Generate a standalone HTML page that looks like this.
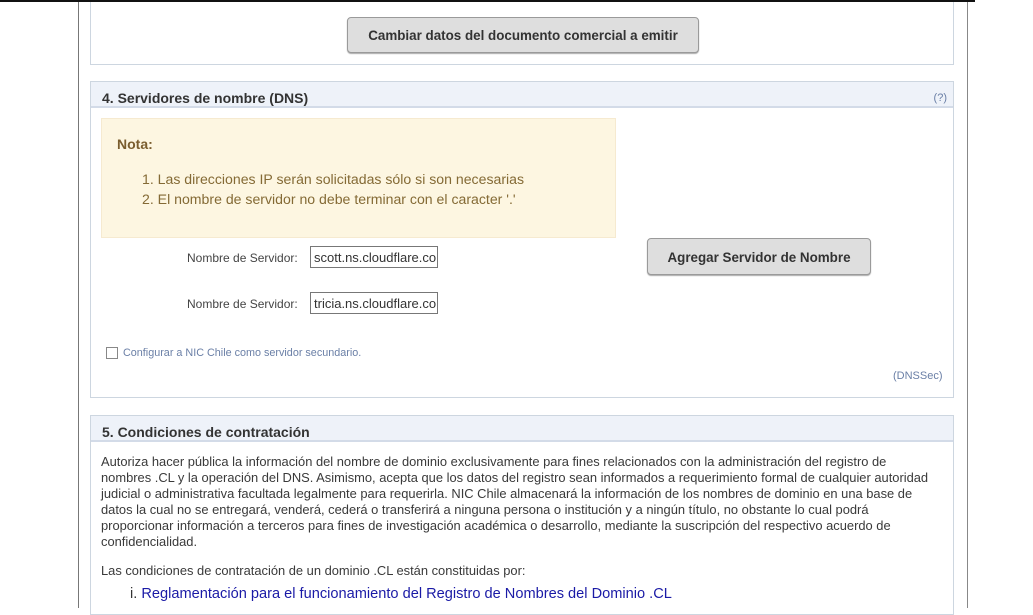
<!DOCTYPE html>
<html><head><meta charset="utf-8"><style>
*{margin:0;padding:0;box-sizing:border-box}
body{width:1033px;height:608px;overflow:hidden;background:#fff;font-family:"Liberation Sans",Arial,sans-serif;position:relative;color:#333}
.abs{position:absolute}
.vl{position:absolute;top:0;height:608px;width:1px;background:#777}
.panel{position:absolute;left:90px;width:864px;border:1px solid #cdd6e0;background:#fff}
.hdr{height:26px;background:#eef2f9;border-bottom:2px solid #d3dbe8;font-weight:bold;font-size:14px;color:#333;padding:8px 0 0 11px;position:relative}
.btn{position:absolute;background:#dedede;border:1px solid #9a9a9a;border-radius:4px;font-weight:bold;font-size:13.4px;color:#333;text-align:center;box-shadow:0 1px 1px #aaa}
.lbl{position:absolute;font-size:12px;color:#444}
.inp{position:absolute;width:128px;height:22px;border:1px solid #777;font-size:13px;color:#333;padding:3px 0 0 3px;white-space:nowrap;overflow:hidden}
.txt{font-size:12.9px;line-height:16px;color:#3a3a3a;white-space:nowrap}
</style></head><body>
<div class="vl" style="left:78px"></div>
<div class="vl" style="left:967px;background:#888"></div>

<div class="panel" style="top:-2px;height:67px;border-top:none"></div>
<div class="abs" style="left:0;top:0;width:975px;height:2px;background:#111"></div>
<div class="btn" style="left:347px;top:17px;width:352px;height:36px;line-height:36px">Cambiar datos del documento comercial a emitir</div>

<div class="panel" style="top:81px;height:317px">
  <div class="hdr">4. Servidores de nombre (DNS)<span style="position:absolute;right:6px;top:10px;font-size:11px;font-weight:normal;color:#6a7fa6">(?)</span></div>
</div>
<div class="abs" style="left:101px;top:118px;width:515px;height:120px;background:#fdf6e1;border:1px solid #f6ead0"></div>
<div class="abs" style="left:117px;top:136px;font-size:14px;font-weight:bold;color:#7a5d2e">Nota:</div>
<div class="abs" style="left:142px;top:169px;font-size:14.1px;line-height:20px;color:#846a35">1. Las direcciones IP serán solicitadas sólo si son necesarias<br>2. El nombre de servidor no debe terminar con el caracter '.'</div>
<div class="lbl" style="left:187px;top:251px">Nombre de Servidor:</div>
<div class="inp" style="left:310px;top:246px">scott.ns.cloudflare.com</div>
<div class="lbl" style="left:187px;top:297px">Nombre de Servidor:</div>
<div class="inp" style="left:310px;top:292px">tricia.ns.cloudflare.com</div>
<div class="btn" style="left:647px;top:238px;width:224px;height:37px;line-height:38px">Agregar Servidor de Nombre</div>
<div class="abs" style="left:106px;top:347px;width:12px;height:12px;border:1px solid #888;background:#fff"></div>
<div class="abs" style="left:123px;top:347px;font-size:10.8px;color:#6a7fa6">Configurar a NIC Chile como servidor secundario.</div>
<div class="abs" style="left:893px;top:370px;font-size:11px;color:#6a7fa6">(DNSSec)</div>

<div class="panel" style="top:415px;height:200px">
  <div class="hdr">5. Condiciones de contratación</div>
</div>
<div class="abs txt" style="left:101px;top:454px">Autoriza hacer pública la información del nombre de dominio exclusivamente para fines relacionados con la administración del registro de<br>nombres .CL y la operación del DNS. Asimismo, acepta que los datos del registro sean informados a requerimiento formal de cualquier autoridad<br>judicial o administrativa facultada legalmente para requerirla. NIC Chile almacenará la información de los nombres de dominio en una base de<br>datos la cual no se entregará, venderá, cederá o transferirá a ninguna persona o institución y a ningún título, no obstante lo cual podrá<br>proporcionar información a terceros para fines de investigación académica o desarrollo, mediante la suscripción del respectivo acuerdo de<br>confidencialidad.</div>
<div class="abs txt" style="left:101px;top:563px">Las condiciones de contratación de un dominio .CL están constituidas por:</div>
<div class="abs" style="left:130px;top:586px;font-size:14.6px;color:#333">i. <span style="color:#1a1aa6">Reglamentación para el funcionamiento del Registro de Nombres del Dominio .CL</span></div>
</body></html>
